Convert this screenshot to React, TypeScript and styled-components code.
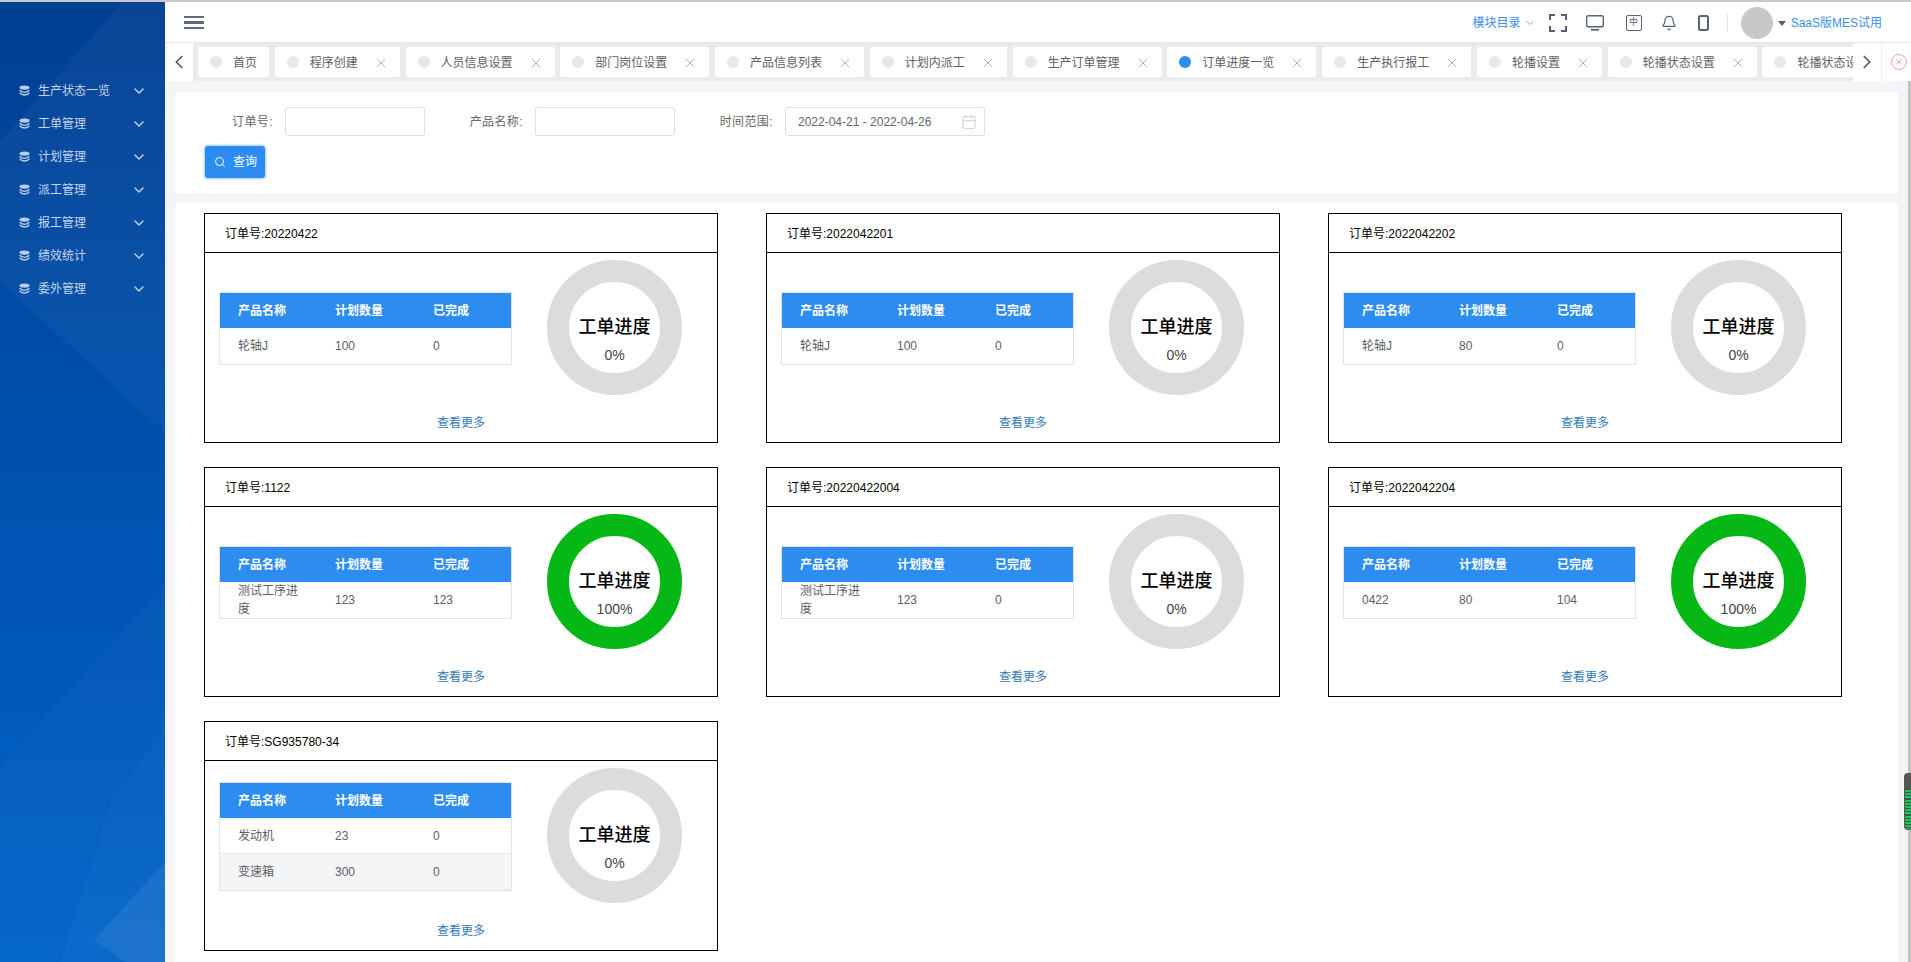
import React from 'react';
import styled, { createGlobalStyle } from 'styled-components';
import { Bell, Calendar, ChevronDown, ChevronLeft, ChevronRight, CircleX, Search } from 'lucide-react';

const GlobalStyle = createGlobalStyle`
  html, body {
    margin: 0;
    padding: 0;
    height: 100%;
    overflow: hidden;
    background: #fff;
    font-family: "Liberation Sans", "Noto Sans CJK SC", sans-serif;
    font-size: 12px;
    color: #555;
  }
  * { box-sizing: border-box; }
`;

const Page = styled.div`
  height: 962px;
  display: flex;
  flex-direction: column;
  overflow: hidden;
`;

const TopLine = styled.div`
  height: 2px;
  flex: none;
  background: #c9c9c9;
`;

const Shell = styled.div`
  flex: 1;
  min-height: 0;
  display: flex;
`;

/** ******
 * Sidebar
 */
const Sidebar = styled.aside`
  position: relative;
  width: 165px;
  flex: none;
  background: linear-gradient(180deg, #003f92 0%, #0052b0 50%, #0064c9 100%);
  overflow: hidden;
`;

const SidebarArt = styled.svg`
  position: absolute;
  inset: 0;
  width: 165px;
  height: 960px;
`;

const Menu = styled.ul`
  position: relative;
  list-style: none;
  margin: 0;
  padding: 72px 0 0;
`;

const MenuItem = styled.li`
  height: 33px;
  display: flex;
  align-items: center;
  padding-left: 19px;
  color: #c6d6f0;
  line-height: 16px;
`;

const MenuIcon = styled.svg`
  width: 11px;
  height: 11px;
  margin-right: 8px;
  fill: #b9cdec;
  stroke: #b9cdec;
`;

const MenuChevron = styled(ChevronDown)`
  margin-left: auto;
  margin-right: 18px;
  color: #c6d6f0;
`;

/** ******
 * Header
 */
const Main = styled.div`
  flex: 1;
  min-width: 0;
  display: flex;
  flex-direction: column;
`;

const Header = styled.header`
  height: 41px;
  flex: none;
  display: flex;
  align-items: center;
  padding: 1px 29px 0 19px;
  background: #fff;
  border-bottom: 1px solid #e6e6e6;
`;

const Hamburger = styled.div`
  width: 20px;
  height: 14px;
  display: flex;
  flex-direction: column;
  justify-content: space-between;

  & > i {
    display: block;
    height: 2.4px;
    background: #5f6b7c;
  }
`;

const HeaderRight = styled.div`
  margin-left: auto;
  display: flex;
  align-items: center;
`;

const ModuleLink = styled.span`
  display: flex;
  align-items: center;
  gap: 3px;
  color: #3a8df0;
  line-height: 16px;
`;

const IconSlot = styled.span<{ $left: number }>`
  display: flex;
  align-items: center;
  margin-left: ${(p) => p.$left}px;
  color: #56607a;
`;

const LangBox = styled.span`
  width: 16px;
  height: 16px;
  display: flex;
  align-items: center;
  justify-content: center;
  border: 1.5px solid #56607a;
  border-radius: 2px;
  font-size: 9px;
  line-height: 1;
  color: #56607a;
`;

const Divider = styled.span`
  width: 1px;
  height: 19px;
  margin-left: 18px;
  background: #e4e8ee;
`;

const Avatar = styled.span`
  width: 32px;
  height: 32px;
  margin-left: 13px;
  border-radius: 50%;
  background: #c8c8c8;
`;

const Caret = styled.span`
  margin: 2px 5px 0;
  border-top: 5px solid #56607a;
  border-left: 4px solid transparent;
  border-right: 4px solid transparent;
`;

const UserName = styled.span`
  color: #3a8df0;
  line-height: 16px;
`;

/** ******
 * Tabs
 */
const TabBar = styled.div`
  height: 38px;
  flex: none;
  display: flex;
  background: #ebebeb;
`;

const TabArrow = styled.div`
  width: 28px;
  flex: none;
  display: flex;
  align-items: center;
  justify-content: center;
  background: #fff;
  color: #4a5568;
`;

const TabStrip = styled.div`
  flex: 1;
  min-width: 0;
  display: flex;
  align-items: center;
  gap: 5.75px;
  padding-left: 5px;
  overflow: hidden;
`;

const Tab = styled.div<{ $closable: boolean }>`
  height: 30px;
  flex: none;
  display: flex;
  align-items: center;
  padding: 1px ${(p) => (p.$closable ? 14 : 12)}px 0 12px;
  background: #fff;
  border-radius: 2px;
  color: #5c6068;
  line-height: 16px;
`;

const TabDot = styled.span<{ $active: boolean }>`
  width: 12px;
  height: 12px;
  margin: -1px 11px 0 0;
  border-radius: 50%;
  background: ${(p) => (p.$active ? '#2d8cf0' : '#e6e8ec')};
`;

const TabClose = styled.svg`
  width: 10px;
  height: 10px;
  margin-left: 18px;
  stroke: #b4b4b4;
  stroke-width: 1;
`;

const CloseBox = styled.div`
  width: 30px;
  flex: none;
  display: flex;
  align-items: center;
  justify-content: center;
  padding-left: 4px;
  background: #fff;
  border-left: 1px solid #eee;
  color: #f58080;
`;

/** ******
 * Content
 */
const Workspace = styled.div`
  flex: 1;
  min-height: 0;
  position: relative;
  display: flex;
  background: #f4f5f7;
`;

const Content = styled.div`
  flex: 1;
  min-width: 0;
  padding: 11px 0 0 10px;
  display: flex;
  flex-direction: column;
  gap: 10px;
`;

const Gutter = styled.div`
  width: 13px;
  flex: none;
  background: linear-gradient(90deg, #f2f3f6 0 10px, #c2c2c2 10px 13px);
`;

const ScrollThumb = styled.div`
  position: absolute;
  right: 0;
  top: 692px;
  width: 7px;
  height: 57px;
  border-radius: 4px 0 0 4px;
  border: 1px solid #555;
  border-right: 0;
  background:
    linear-gradient(#555 0 15px, transparent 15px),
    repeating-linear-gradient(#1cc45c 0 2px, #3d5a48 2px 3.2px);
`;

const FilterPanel = styled.section`
  height: 101px;
  flex: none;
  padding-top: 15px;
  background: #fff;
  border-radius: 4px;
`;

const FilterRow = styled.div`
  display: flex;
  align-items: center;
`;

const FieldLabel = styled.label`
  width: 98px;
  margin-right: 12px;
  text-align: right;
  color: #666;
  line-height: 16px;
  letter-spacing: 0.4px;
`;

const TextField = styled.input`
  width: 140px;
  height: 29px;
  padding: 0 10px;
  border: 1px solid #dcdfe6;
  border-radius: 3px;
  outline: 0;
  background: #fff;
`;

const DateField = styled.div`
  width: 200px;
  height: 29px;
  display: flex;
  align-items: center;
  justify-content: space-between;
  padding: 0 7px 0 12px;
  border: 1px solid #dcdfe6;
  border-radius: 3px;
  color: #606672;
  line-height: 16px;

  & > svg {
    color: #bbb;
  }
`;

const QueryButton = styled.button`
  width: 60px;
  height: 32px;
  margin: 10px 0 0 30px;
  display: flex;
  align-items: center;
  gap: 7px;
  padding: 0 0 0 9px;
  border: 0;
  border-radius: 3px;
  background: #2d8cf0;
  box-shadow: 0 0 0 1.5px #bcdcfb;
  color: #fff;
  font: inherit;
  line-height: 16px;
`;

const OrdersPanel = styled.section`
  flex: 1;
  min-height: 0;
  padding: 10px 0 0 29px;
  background: #fff;
  border-radius: 4px 4px 0 0;
  overflow: hidden;
`;

const OrderGrid = styled.div`
  display: grid;
  grid-template-columns: repeat(3, 514px);
  column-gap: 48px;
  row-gap: 24px;
`;

const OrderCard = styled.article`
  height: 230px;
  border: 1px solid #000;
  background: #fff;
`;

const OrderTitle = styled.div`
  height: 39px;
  display: flex;
  align-items: center;
  padding: 2px 0 0 20px;
  border-bottom: 1px solid #000;
  color: #000;
  line-height: 16px;
`;

const OrderBody = styled.div`
  height: 135px;
  margin-top: 7px;
  padding-left: 14px;
  display: flex;
  align-items: center;
`;

const ProductTable = styled.table`
  width: 293px;
  flex: none;
  margin-top: 2px;
  table-layout: fixed;
  border-collapse: separate;
  border-spacing: 0;
  border: 1px solid #e0e3e8;

  th {
    height: 35px;
    padding: 0 0 0 18px;
    background: #2d8cf0;
    color: #fff;
    font-weight: 700;
    text-align: left;
    line-height: 16px;
  }

  th:first-child {
    width: 97px;
  }

  th:nth-child(2) {
    width: 98px;
  }

  td {
    height: 36px;
    padding: 0 18px;
    color: #5c6068;
    line-height: 18px;
    word-break: break-all;
    border-bottom: 1px solid #e6e8ec;
  }

  tr:last-child td {
    border-bottom: 0;
  }

  tbody tr:nth-child(even) td {
    background: #f4f5f7;
  }
`;

const Ring = styled.div<{ $done: boolean }>`
  width: 135px;
  height: 135px;
  flex: none;
  margin-left: 35px;
  padding-top: 33px;
  border: 22.5px solid ${(p) => (p.$done ? '#06b815' : '#dcdcdc')};
  border-radius: 50%;
  text-align: center;
`;

const RingTitle = styled.div`
  font-size: 18px;
  font-weight: 500;
  line-height: 24px;
  color: #000;
  white-space: nowrap;
`;

const RingValue = styled.div`
  margin-top: 6px;
  font-size: 14px;
  line-height: 20px;
  color: #444;
`;

const MoreLink = styled.a`
  display: block;
  margin-top: 18px;
  text-align: center;
  color: #337ab7;
  line-height: 20px;
`;

const menuItems = ['生产状态一览', '工单管理', '计划管理', '派工管理', '报工管理', '绩效统计', '委外管理'];

const tabs = [
  '首页',
  '程序创建',
  '人员信息设置',
  '部门岗位设置',
  '产品信息列表',
  '计划内派工',
  '生产订单管理',
  '订单进度一览',
  '生产执行报工',
  '轮播设置',
  '轮播状态设置',
  '轮播状态设置',
];

type Order = {
  no: string;
  percent: number;
  rows: [string, number, number][];
};

const orders: Order[] = [
  { no: '20220422', percent: 0, rows: [['轮轴J', 100, 0]] },
  { no: '2022042201', percent: 0, rows: [['轮轴J', 100, 0]] },
  { no: '2022042202', percent: 0, rows: [['轮轴J', 80, 0]] },
  { no: '1122', percent: 100, rows: [['测试工序进度', 123, 123]] },
  { no: '20220422004', percent: 0, rows: [['测试工序进度', 123, 0]] },
  { no: '2022042204', percent: 100, rows: [['0422', 80, 104]] },
  {
    no: 'SG935780-34',
    percent: 0,
    rows: [
      ['发动机', 23, 0],
      ['变速箱', 300, 0],
    ],
  },
];

const OrderBlock: React.FC<{ order: Order }> = ({ order }) => (
  <OrderCard>
    <OrderTitle>订单号:{order.no}</OrderTitle>
    <OrderBody>
      <ProductTable>
        <thead>
          <tr>
            <th>产品名称</th>
            <th>计划数量</th>
            <th>已完成</th>
          </tr>
        </thead>
        <tbody>
          {order.rows.map((row) => (
            <tr key={row[0]}>
              <td>{row[0]}</td>
              <td>{row[1]}</td>
              <td>{row[2]}</td>
            </tr>
          ))}
        </tbody>
      </ProductTable>
      <Ring $done={order.percent === 100}>
        <RingTitle>工单进度</RingTitle>
        <RingValue>{order.percent}%</RingValue>
      </Ring>
    </OrderBody>
    <MoreLink>查看更多</MoreLink>
  </OrderCard>
);

export default function App() {
  return (
    <Page>
      <GlobalStyle />
      <TopLine />
      <Shell>
        <Sidebar>
          <SidebarArt viewBox="0 0 165 960">
            <polygon points="0,140 122,0 165,0 165,430 0,280" fill="#ffffff" opacity="0.035" />
            <polygon points="0,765 165,581 165,960 0,960" fill="#ffffff" opacity="0.025" />
            <polygon points="113,795 165,728 165,960 60,960" fill="#ffffff" opacity="0.02" />
            <polygon points="94,938 165,860 165,960 125,960" fill="#ffffff" opacity="0.07" />
          </SidebarArt>
          <Menu>
            {menuItems.map((item) => (
              <MenuItem key={item}>
                <MenuIcon viewBox="0 0 11 11">
                  <ellipse cx="5.5" cy="2.6" rx="5" ry="2.2" stroke="none" />
                  <path d="M0.6 5.2c1 1.5 2.9 2.1 4.9 2.1s3.9-.6 4.9-2.1" fill="none" strokeWidth="1.3" />
                  <path d="M0.6 7.6c1 1.6 2.9 2.4 4.9 2.4s3.9-.8 4.9-2.4" fill="none" strokeWidth="1.3" />
                </MenuIcon>
                {item}
                <MenuChevron size={16} strokeWidth={2} />
              </MenuItem>
            ))}
          </Menu>
        </Sidebar>
        <Main>
          <Header>
            <Hamburger>
              <i />
              <i />
              <i />
            </Hamburger>
            <HeaderRight>
              <ModuleLink>
                模块目录
                <ChevronDown size={12} strokeWidth={1.5} />
              </ModuleLink>
              <IconSlot $left={13}>
                <svg width="18" height="18" viewBox="0 0 18 18" fill="none" stroke="currentColor" strokeWidth="2">
                  <path d="M1 6V1h5M12 1h5v5M17 12v5h-5M6 17H1v-5" />
                </svg>
              </IconSlot>
              <IconSlot $left={19}>
                <svg width="18" height="16" viewBox="0 0 18 16" fill="none" stroke="currentColor" strokeWidth="1.4">
                  <rect x="0.7" y="0.7" width="16.6" height="11" rx="1.5" />
                  <path d="M5 14.8h8" strokeWidth="1.8" />
                </svg>
              </IconSlot>
              <IconSlot $left={22}>
                <LangBox>中</LangBox>
              </IconSlot>
              <IconSlot $left={19}>
                <Bell size={16} strokeWidth={1.8} />
              </IconSlot>
              <IconSlot $left={21}>
                <svg width="11" height="16" viewBox="0 0 11 16" fill="none" stroke="currentColor" strokeWidth="2">
                  <rect x="1" y="1" width="9" height="14" rx="1.5" />
                </svg>
              </IconSlot>
              <Divider />
              <Avatar />
              <Caret />
              <UserName>SaaS版MES试用</UserName>
            </HeaderRight>
          </Header>
          <TabBar>
            <TabArrow>
              <ChevronLeft size={22} strokeWidth={1.8} />
            </TabArrow>
            <TabStrip>
              {tabs.map((tab, i) => (
                <Tab key={`${tab}-${i}`} $closable={i > 0}>
                  <TabDot $active={tab === '订单进度一览'} />
                  {tab}
                  {i > 0 && (
                    <TabClose viewBox="0 0 10 10">
                      <path d="M1 1l8 8M9 1l-8 8" />
                    </TabClose>
                  )}
                </Tab>
              ))}
            </TabStrip>
            <TabArrow>
              <ChevronRight size={22} strokeWidth={1.8} />
            </TabArrow>
            <CloseBox>
              <CircleX size={18} strokeWidth={1} />
            </CloseBox>
          </TabBar>
          <Workspace>
            <Content>
              <FilterPanel>
                <FilterRow>
                  <FieldLabel>订单号:</FieldLabel>
                  <TextField />
                  <FieldLabel>产品名称:</FieldLabel>
                  <TextField />
                  <FieldLabel>时间范围:</FieldLabel>
                  <DateField>
                    2022-04-21 - 2022-04-26
                    <Calendar size={16} strokeWidth={1} />
                  </DateField>
                </FilterRow>
                <QueryButton>
                  <Search size={12} strokeWidth={2} />
                  查询
                </QueryButton>
              </FilterPanel>
              <OrdersPanel>
                <OrderGrid>
                  {orders.map((order) => (
                    <OrderBlock key={order.no} order={order} />
                  ))}
                </OrderGrid>
              </OrdersPanel>
            </Content>
            <Gutter />
            <ScrollThumb />
          </Workspace>
        </Main>
      </Shell>
    </Page>
  );
}
